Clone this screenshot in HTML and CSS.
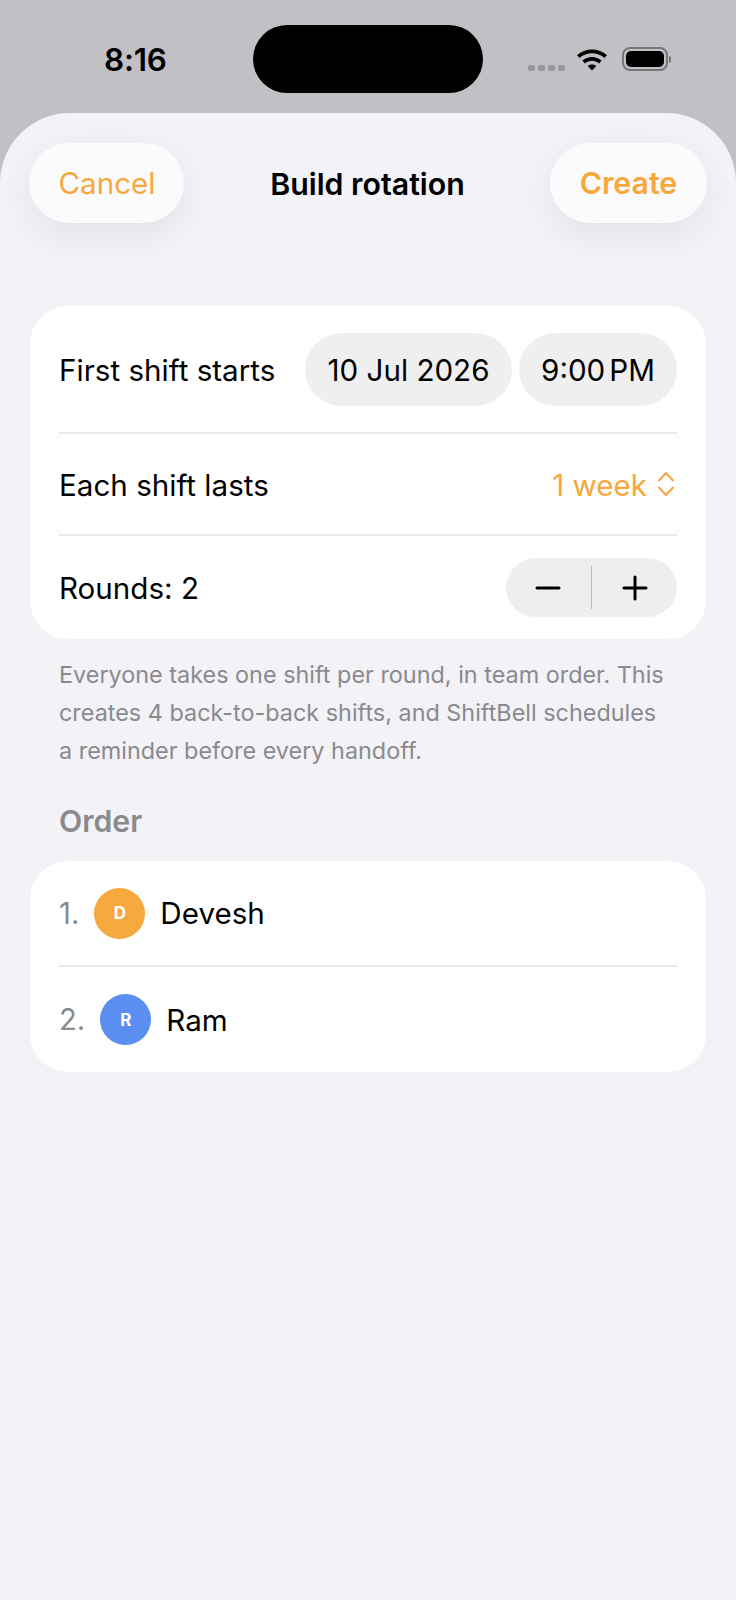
FILE: index.html
```html
<!DOCTYPE html>
<html>
    <head>
        <meta charset="utf-8">
        <title>Build rotation</title>
        <link rel="stylesheet" href="styles.css">
    </head>
    <body>
        <div class="status-bar">
            <div class="time">8:16</div>
            <div class="island"></div>
            <div class="status-icons">
                <div class="signal"><span></span><span></span><span></span><span></span></div>
                <svg class="wifi" width="32" height="24" viewBox="0 0 32 24">
                    <path d="M1 8.2 C9.5 0.6 22.5 0.6 31 8.2 L28.4 11 C21.2 4.8 10.8 4.8 3.6 11 Z" fill="#000"/>
                    <path d="M6.4 13.6 C12 8.8 20 8.8 25.6 13.6 L23 16.4 C18.8 13 13.2 13 9 16.4 Z" fill="#000"/>
                    <path d="M11.6 19 C14.2 17 17.8 17 20.4 19 L16 23.6 Z" fill="#000"/>
                </svg>
                <div class="battery"><div class="battery-fill"></div></div>
                <div class="battery-cap"></div>
            </div>
        </div>
        <div class="sheet">
            <div class="nav">
                <div class="nav-button cancel">Cancel</div>
                <div class="nav-title">Build rotation</div>
                <div class="nav-button create">Create</div>
            </div>

            <div class="card">
                <div class="row row-start">
                    <div class="label">First shift starts</div>
                    <div class="pills">
                        <div class="pill pill-date">10 Jul 2026</div>
                        <div class="pill pill-time">9:00<span class="thin-gap"></span>PM</div>
                    </div>
                </div>
                <div class="row row-length">
                    <div class="label">Each shift lasts</div>
                    <div class="picker">
                        <span class="label">1 week</span>
                        <svg width="18" height="26" viewBox="0 0 18 26" fill="none" stroke="#f9a63a" stroke-width="2" stroke-linecap="round" stroke-linejoin="round">
                            <path d="M2 9.5 L9 2 L16 9.5"/>
                            <path d="M2 16.5 L9 24 L16 16.5"/>
                        </svg>
                    </div>
                </div>
                <div class="row row-rounds">
                    <div class="label">Rounds: 2</div>
                    <div class="stepper">
                        <div class="step">
                            <svg width="26" height="26" viewBox="0 0 26 26"><path d="M2 13 H24" stroke="#000" stroke-width="3" stroke-linecap="round"/></svg>
                        </div>
                        <div class="step-line"></div>
                        <div class="step">
                            <svg width="26" height="26" viewBox="0 0 26 26"><path d="M2 13 H24 M13 2 V24" stroke="#000" stroke-width="3" stroke-linecap="round"/></svg>
                        </div>
                    </div>
                </div>
            </div>

            <p class="note">Everyone takes one shift per round, in team order. This creates 4 back-to-back shifts, and ShiftBell schedules a reminder before every handoff.</p>

            <h2 class="section-title">Order</h2>

            <div class="card">
                <div class="row row-person">
                    <div class="number">1.</div>
                    <div class="avatar avatar-orange">D</div>
                    <div class="label">Devesh</div>
                </div>
                <div class="row row-person">
                    <div class="number">2.</div>
                    <div class="avatar avatar-blue">R</div>
                    <div class="label">Ram</div>
                </div>
            </div>
        </div>
    </body>
</html>
```

FILE: styles.css
```css
html, body {
    margin: 0;
    height: 1600px;
    overflow: hidden;
}

body {
    font-family: Inter, "Noto Sans", sans-serif;
    background-color: #c1c0c5;
    color: #000;
    display: flex;
    flex-direction: column;
}

.status-bar {
    height: 113px;
    flex-shrink: 0;
    display: flex;
    align-items: flex-start;
    padding-left: 104px;
    box-sizing: border-box;
}

.time {
    width: 149px;
    margin-top: 38px;
    font-size: 31.4px;
    line-height: 44px;
    font-weight: 600;
    letter-spacing: -0.2px;
}

.island {
    width: 230px;
    height: 68px;
    margin-top: 25px;
    background-color: #000;
    border-radius: 34px;
}

.status-icons {
    display: flex;
    align-items: center;
    margin-left: 45px;
    margin-top: 47px;
}

.signal {
    display: flex;
    gap: 3.5px;
    align-self: flex-end;
    margin-right: 11px;
}

.signal span {
    width: 6.5px;
    height: 6.5px;
    border-radius: 2px;
    background-color: #98979b;
}

.wifi {
    margin-right: 14px;
}

.battery {
    width: 46px;
    height: 24px;
    box-sizing: border-box;
    border: 2px solid #77767a;
    border-radius: 8px;
    padding: 2px;
}

.battery-fill {
    height: 100%;
    background-color: #000;
    border-radius: 5px;
}

.battery-cap {
    width: 2px;
    height: 7px;
    margin-left: 1px;
    background-color: #77767a;
    border-radius: 0 2px 2px 0;
}

.sheet {
    flex: 1;
    background-color: #f2f2f7;
    border-radius: 70px 70px 0 0;
    padding: 30px 30px 0 30px;
}

.nav {
    display: flex;
    justify-content: space-between;
    align-items: center;
    height: 80px;
    margin-left: -1px;
    margin-right: -1px;
    margin-bottom: 83px;
}

.nav-button {
    height: 80px;
    line-height: 81px;
    border-radius: 40px;
    background-color: #fbfbfe;
    box-shadow: 0 12px 36px rgba(0, 0, 0, 0.07);
    color: #f9a63a;
    font-size: 29.6px;
    text-align: center;
}

.cancel {
    width: 154px;
    padding-left: 1px;
}

.create {
    width: 157px;
    font-size: 30.3px;
    font-weight: 600;
}

.nav-title {
    font-size: 30.3px;
    font-weight: 600;
    padding-top: 1px;
    padding-left: 1px;
}

.card {
    background-color: #fff;
    border-radius: 38px;
    padding: 0 29px;
}

.row {
    display: flex;
    align-items: center;
    border-bottom: 2px solid #e8e8ea;
}

.row:last-child {
    border-bottom: none;
}

.row-start {
    justify-content: space-between;
    height: 126px;
}

.row-length {
    justify-content: space-between;
    height: 100px;
}

.row-rounds {
    justify-content: space-between;
    height: 103px;
}

.row-person {
    height: 104px;
}

.row-person:last-child {
    height: 105px;
}

.label {
    font-size: 29.6px;
    padding-top: 2px;
}

.row-rounds .label, .row-person .label {
    padding-top: 0;
}

.pills {
    display: flex;
    gap: 7px;
}

.pill {
    height: 73px;
    line-height: 75px;
    border-radius: 37px;
    background-color: #efefef;
    font-size: 29.6px;
    text-align: center;
}

.pill-date {
    width: 207px;
}

.pill-time {
    width: 158px;
}

.thin-gap {
    display: inline-block;
    width: 4px;
}

.picker {
    display: flex;
    align-items: center;
    gap: 10px;
    color: #f9a63a;
    margin-right: 2px;
}

.stepper {
    display: flex;
    align-items: center;
    width: 171px;
    height: 59px;
    border-radius: 30px;
    background-color: #eeeeee;
}

.step {
    flex: 1;
    display: flex;
    justify-content: center;
    align-items: center;
}

.step-line {
    width: 1.5px;
    height: 43px;
    background-color: #b8b8ba;
}

.note {
    margin: 17px 36px 0 29px;
    color: #8a8a8e;
    font-size: 23.4px;
    line-height: 38px;
}

.section-title {
    margin: 31px 29px 20px 29px;
    color: #8a8a8e;
    font-size: 30.2px;
    line-height: 40px;
    font-weight: 600;
}

.number {
    color: #8a8a8e;
    font-size: 29.3px;
    margin-right: 15px;
}

.avatar {
    width: 51px;
    height: 51px;
    border-radius: 50%;
    display: flex;
    justify-content: center;
    align-items: center;
    color: #fff;
    font-size: 17px;
    font-weight: 700;
    margin-right: 15px;
}

.avatar-orange {
    background-color: #f7a83e;
}

.avatar-blue {
    background-color: #5a8ef0;
}
```
